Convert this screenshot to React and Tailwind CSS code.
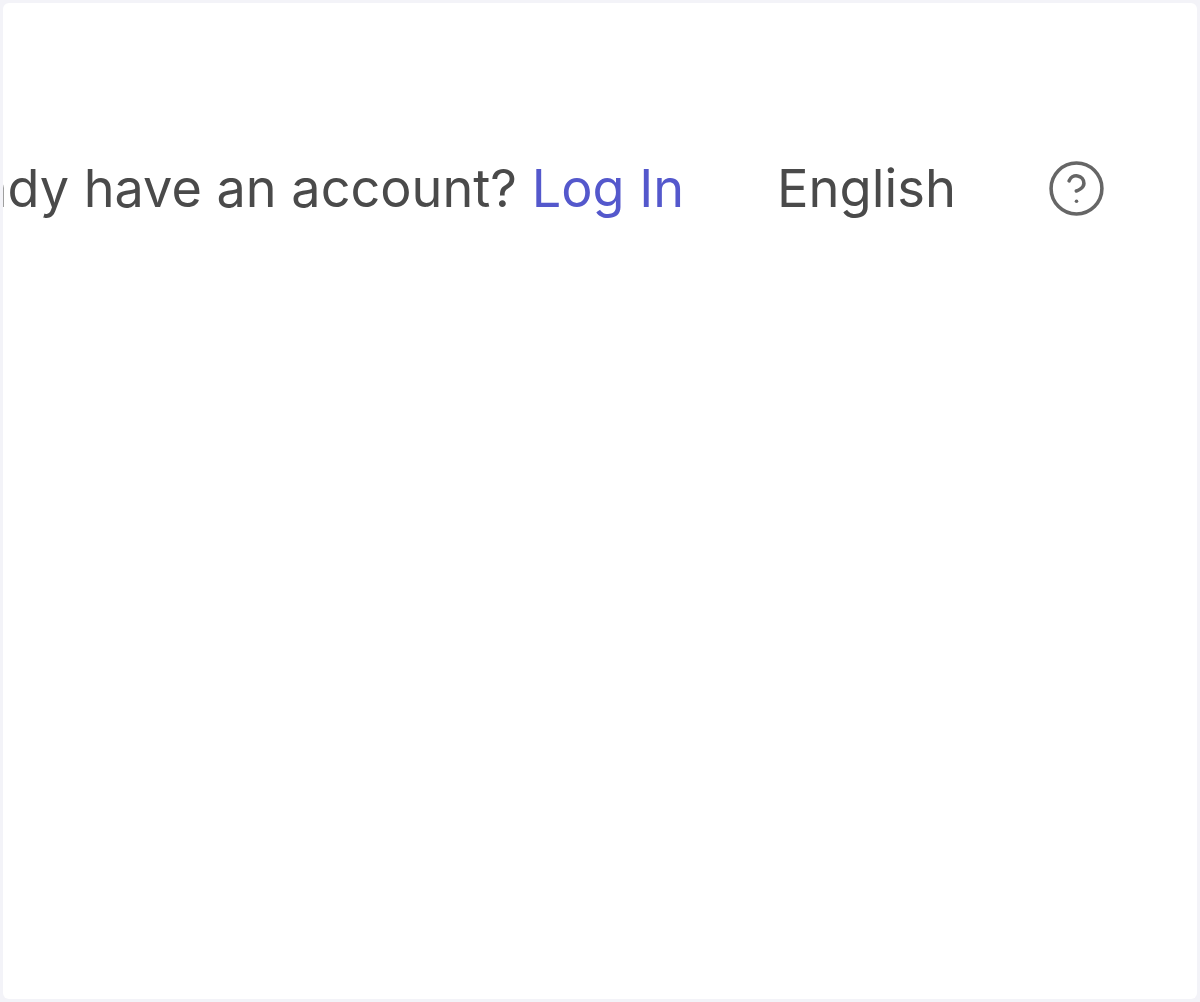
import { CircleHelp } from 'lucide-react';

export default function App() {
    return (
        <div className="h-[1002px] w-[1200px] overflow-hidden bg-[#f3f3f8] p-[3px] font-['Inter',sans-serif]">
            <div className="h-full overflow-hidden rounded-[6px] bg-white">
                <div className="flex justify-end items-center pt-[152px] pr-[90px] whitespace-nowrap text-[52.5px] leading-[66px] text-[#4a4a4a]">
                    <span className="shrink-0 text-[52.2px]">
                        Already have an account? <a className="text-[#5458cc]">Log In</a>
                    </span>
                    <span className="shrink-0 ml-[93px]">English</span>
                    <CircleHelp className="shrink-0 ml-[90px] h-[61px] w-[61px] text-[#666666]" strokeWidth={1.4} />
                </div>
            </div>
        </div>
    );
}
